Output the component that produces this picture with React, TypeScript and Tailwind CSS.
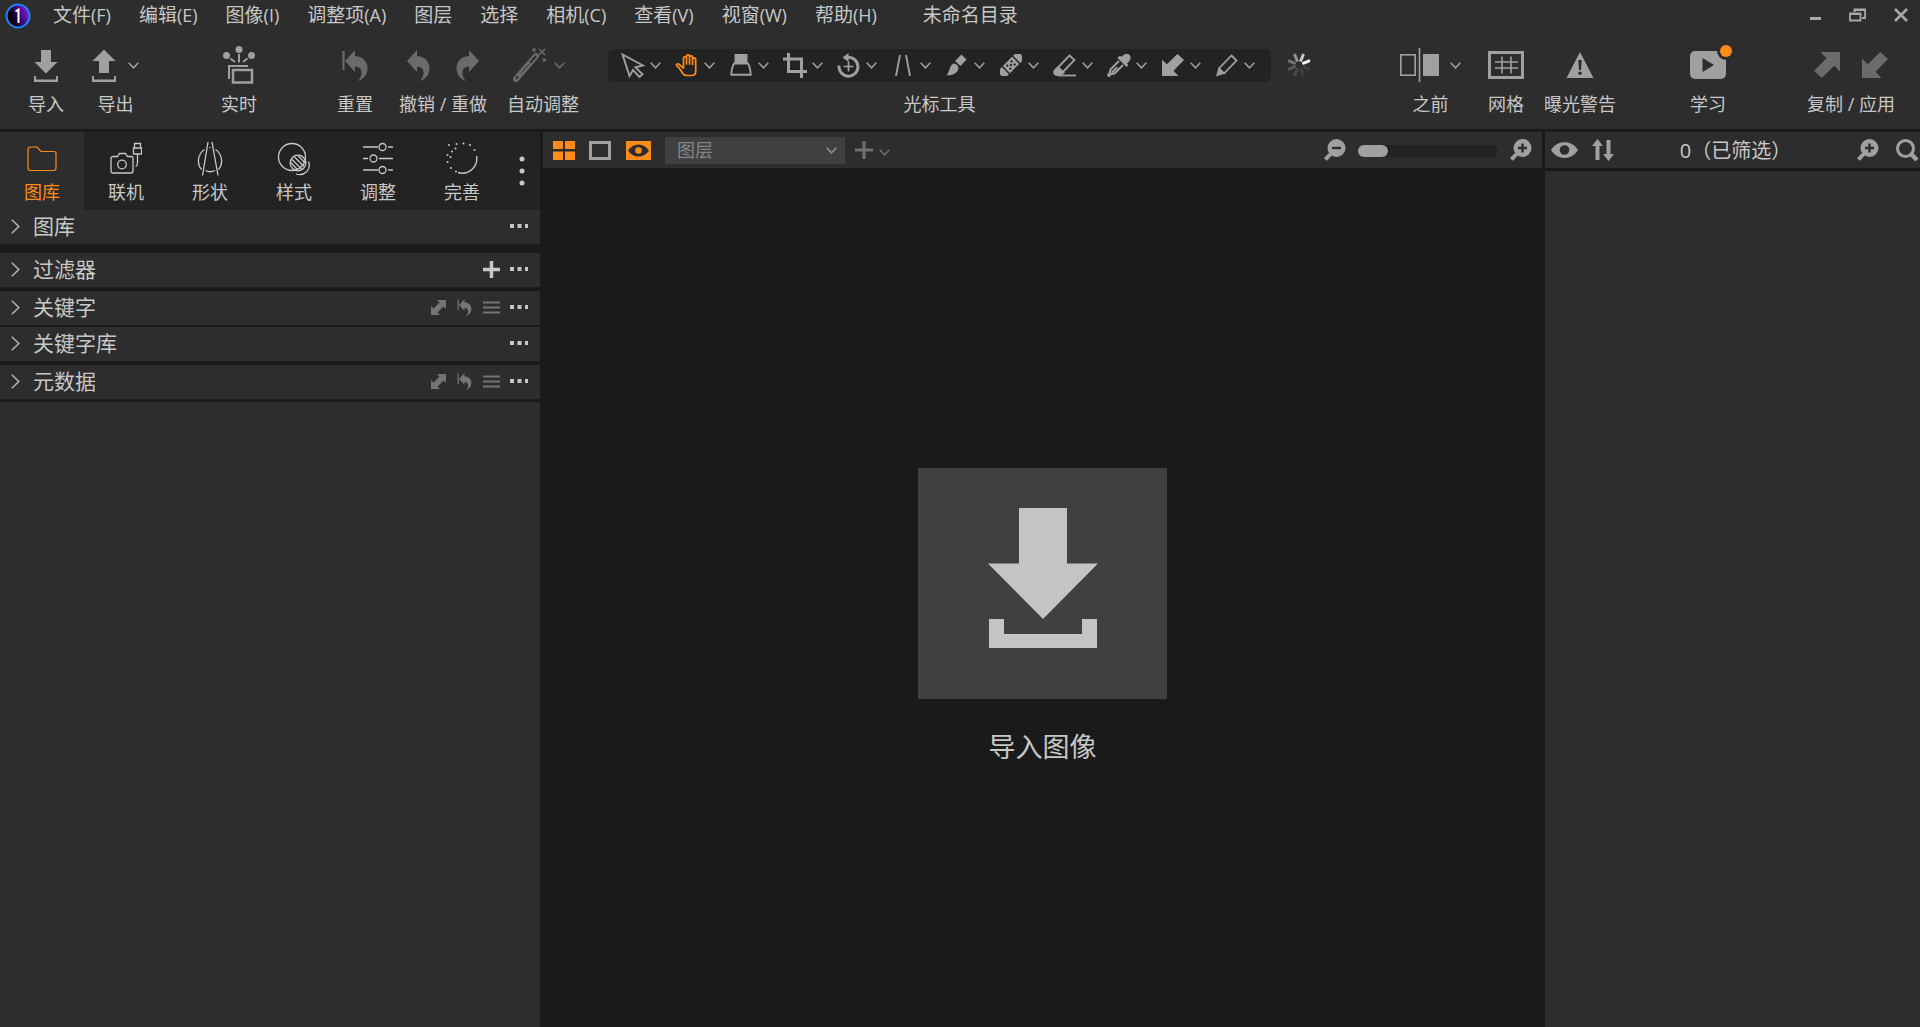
import React, { useState } from "react";

type SvgProps = { w: number; h: number; className?: string; children: React.ReactNode };

function Svg({ w, h, className = "", children }: SvgProps) {
  return (
    <svg width={w} height={h} viewBox={`0 0 ${w} ${h}`} fill="none" aria-hidden="true" className={`shrink-0 ${className}`}>
      {children}
    </svg>
  );
}

const Chevron = ({ className = "" }: { className?: string }) => (
  <Svg w={11} h={7} className={className}>
    <path d="M.7 .8 5.5 5.8 10.3 .8" stroke="currentColor" strokeWidth="1.5" />
  </Svg>
);

const ImportIcon = () => (
  <Svg w={24} h={33}>
    <path d="M7 1h10v12h6.500L12 24.500.5 13H7z" fill="currentColor" />
    <path d="M0 27h2v3.500h20V27h2v6H0z" fill="currentColor" />
  </Svg>
);
const ExportIcon = () => (
  <Svg w={24} h={33}>
    <path d="M7 24h10V12h6.500L12 .5.5 12H7z" fill="currentColor" />
    <path d="M0 27h2v3.500h20V27h2v6H0z" fill="currentColor" />
  </Svg>
);
const LiveIcon = () => (
  <Svg w={32} h={38}>
    <g fill="currentColor">
      <circle cx="16" cy="3.500" r="3.500" />
      <circle cx="3.500" cy="9.500" r="3.500" />
      <circle cx="28.500" cy="9.500" r="3.500" />
    </g>
    <g stroke="currentColor" strokeWidth="2">
      <path d="M16 8v8.500M7.500 12.500l4.500 3.500M24.500 12.500 20 16" />
      <path d="M6 33V20h19" />
      <rect x="10" y="24" width="19" height="12.500" strokeWidth="2.500" />
    </g>
  </Svg>
);
const ResetIcon = ({ w = 26, h = 31 }: { w?: number; h?: number }) => (
  <svg width={w} height={h} viewBox="0 0 26 31" fill="none" aria-hidden="true" className="shrink-0">
    <path d="M1.500 1v19" stroke="currentColor" strokeWidth="2.200" />
    <path d="M13 0v6c8 .5 13 6 12.500 13-.4 6-4 10-9.500 12 4.500-4.500 6-14-3-14.500V22L3 11z" fill="currentColor" />
  </svg>
);
const UndoIcon = ({ flip = false }: { flip?: boolean }) => (
  <Svg w={23} h={31} className={flip ? "-scale-x-100" : ""}>
    <path d="M10 0v6c8 .5 13 6 12.500 13-.4 6-4 10-9.500 12 4.500-4.500 6-14-3-14.500V22L0 11z" fill="currentColor" />
  </Svg>
);
const WandIcon = () => (
  <Svg w={33} h={34}>
    <path d="M3 31 23 8" stroke="currentColor" strokeWidth="6" strokeLinecap="round" />
    <path d="m17 15 6-7" stroke="#2d2d2d" strokeWidth="2" />
    <path d="m8 25.500 8-9.500" stroke="#2d2d2d" strokeWidth="1" />
    <circle cx="4" cy="29.500" r="1.300" fill="#2d2d2d" />
    <path d="m26 1 6 6m0-6-6 6M19.500.5l3 3m0-3-3 3M30 10.500l3 3m0-3-3 3" stroke="currentColor" strokeWidth="1.500" />
  </Svg>
);

const PointerIcon = () => (
  <Svg w={24} h={25}>
    <path d="m1.500 1.500 20.500 11-7.500 1.800 7 7-3 2.700-6.500-7-3.500 6z" stroke="currentColor" strokeWidth="1.900" />
  </Svg>
);
const HandIcon = () => (
  <Svg w={23} h={23}>
    <path
      d="M8.500 13V4.200a1.500 1.500 0 0 1 3 0V10 2.300a1.500 1.500 0 0 1 3 0V10 3.300a1.500 1.500 0 0 1 3 0V10.500 5.500a1.500 1.500 0 0 1 3.200 0V17.500c0 2.500-1.700 4-4.200 4h-4.500c-2.500 0-3.800-1-5-3.200L3.800 13.500 1.700 11.800c-.8-1.200.8-2.400 2.300-1.500L8.500 14z"
      stroke="currentColor"
      strokeWidth="1.700"
      strokeLinejoin="round"
    />
  </Svg>
);
const GradientLensIcon = () => (
  <Svg w={22} h={22}>
    <path d="M4.500 0h13v9.500h-13z" fill="currentColor" />
    <path d="M4 9.500h14c1.500 2.500 2.500 6.500 2.700 11.200H1.300C1.500 16 2.500 12 4 9.500z" stroke="currentColor" strokeWidth="1.900" />
  </Svg>
);
const CropIcon = () => (
  <Svg w={24} h={25}>
    <path d="M5.500 0v18.500H24M0 6h18.500v19" stroke="currentColor" strokeWidth="3" />
  </Svg>
);
const RotateIcon = () => (
  <Svg w={24} h={25}>
    <path d="M10.500 4.200A9.500 9.500 0 1 1 2 12.500" stroke="currentColor" strokeWidth="3" />
    <path d="M11.500 0v9L5.500 4.500z" fill="currentColor" />
    <path d="M11.500 8.500v10M6.500 13.500h10" stroke="currentColor" strokeWidth="1.700" />
  </Svg>
);
const KeystoneIcon = () => (
  <Svg w={16} h={21}>
    <path d="M5 0 1 21M11 0l4 21" stroke="currentColor" strokeWidth="1.900" />
  </Svg>
);
const BrushIcon = () => (
  <Svg w={21} h={22}>
    <path d="M15.500.5 20.500 5.500 14.500 12 9 7z" fill="currentColor" />
    <path d="M8 9.500c2.500.3 4.500 2.200 4.500 5-1 5-6 7.300-12 6.700C4 18 3 11 8 9.500z" fill="currentColor" />
  </Svg>
);
const HealIcon = () => (
  <Svg w={22} h={22}>
    <g transform="rotate(-45 11 11)">
      <path d="M3 6H1.500a5 5 0 0 0 0 10H3zM19 6h1.500a5 5 0 0 1 0 10H19z" fill="currentColor" />
      <rect x="4.500" y="6" width="13" height="10" fill="currentColor" />
      <g fill="#232323">
        <rect x="7" y="7.800" width="2" height="2" />
        <rect x="13" y="7.800" width="2" height="2" />
        <rect x="7" y="12.200" width="2" height="2" />
        <rect x="13" y="12.200" width="2" height="2" />
        <rect x="10" y="10" width="2" height="2" />
      </g>
    </g>
  </Svg>
);
const EraserIcon = () => (
  <Svg w={23} h={23}>
    <path d="M16.500 1.500 21.500 6 7.500 20.500 2.500 16z" stroke="currentColor" strokeWidth="1.800" />
    <path d="m5 12 7 6.500-3.500 3-4 .5C1 22-1 18.500 1 16z" fill="currentColor" />
    <path d="M5 21.500h18" stroke="currentColor" strokeWidth="1.800" />
  </Svg>
);
const DropperIcon = () => (
  <Svg w={24} h={24}>
    <path d="m15 3.500c3-4.500 9-3.500 8.500 2-.5 3-3 4-3.500 5l1.500 1.500-2 2L10.500 5l2-2z" fill="currentColor" />
    <path d="M12 8 3.500 16.500 2.500 21.500l5-1L16 12" stroke="currentColor" strokeWidth="2" />
    <path d="m9 14-5 5 1.500 1.500 6-6z" fill="currentColor" />
    <circle cx="2" cy="22" r="1.900" fill="currentColor" />
  </Svg>
);
const ArrowSW = ({ size = 22 }: { size?: number }) => (
  <svg width={size} height={size} viewBox="0 0 22 22" aria-hidden="true" className="shrink-0">
    <path d="M0 5.500 4.800 10.300 15.500 0 22 6 11.500 16.800 16.500 22H0z" fill="currentColor" />
  </svg>
);
const PenIcon = () => (
  <Svg w={22} h={23}>
    <path d="M15.500 1.500 20.500 6.500 8 19.500 3 14.500z" stroke="currentColor" strokeWidth="1.800" />
    <path d="M2.500 13.500 9 19.500 0 22.500z" fill="currentColor" />
  </Svg>
);

const SPOKES = ["#c5c5c5", "#f8f8f8", "#3d3d3d", "#404040", "#484848", "#5a5a5a", "#747474", "#8f8f8f"];
const Spinner = () => (
  <svg width="24" height="24" viewBox="-12 -12 24 24" role="img" aria-label="处理中" className="shrink-0">
    {SPOKES.map((c, i) => (
      <rect key={i} x="-1.500" y="-12" width="3" height="8.500" rx="1" fill={c} transform={`rotate(${22.5 + i * 45})`} />
    ))}
  </svg>
);

const BeforeIcon = () => (
  <Svg w={39} h={34}>
    <rect x=".8" y="6.800" width="14.400" height="20.400" stroke="currentColor" strokeWidth="1.600" />
    <path d="M19.500 0v34" stroke="currentColor" strokeWidth="1.600" />
    <rect x="23" y="6" width="16" height="22" fill="currentColor" />
  </Svg>
);
const GridIcon = () => (
  <Svg w={36} h={28}>
    <rect x="1.500" y="1.500" width="33" height="25" stroke="currentColor" strokeWidth="3" />
    <path d="M7 11h23M7 17h23M14 5.500v17M23 5.500v17" stroke="currentColor" strokeWidth="1.600" />
  </Svg>
);
const WarnIcon = () => (
  <Svg w={28} h={26}>
    <path d="M14 0 27.500 26H.5z" fill="currentColor" />
    <path d="M12.300 8h3.400l-.7 10h-2z" fill="#2d2d2d" />
    <circle cx="14" cy="21.300" r="1.800" fill="#2d2d2d" />
  </Svg>
);
const LearnIcon = () => (
  <Svg w={36} h={28}>
    <rect width="36" height="28" rx="5" fill="currentColor" />
    <path d="M12.500 7v14L24 14z" fill="#2d2d2d" />
    <circle cx="36" cy="0" r="9" fill="#2d2d2d" />
  </Svg>
);

const FolderIcon = () => (
  <Svg w={30} h={34}>
    <path d="M4 5h6l4 4.500h13c1 0 2 1 2 2V26c0 1.500-1 2.500-2.500 2.500H3.500C2 28.500 1 27.500 1 26V7.500C1 6 2 5 4 5z" stroke="currentColor" strokeWidth="1.200" />
  </Svg>
);
const TetherIcon = () => (
  <Svg w={32} h={34}>
    <g stroke="currentColor" strokeWidth="1.300">
      <path d="M3 14.500h4.500l2-3h6l2 3H21c1.300 0 2 .8 2 2V29c0 1.300-.8 2-2 2H3c-1.300 0-2-.8-2-2V16.500c0-1.200.8-2 2-2z" />
      <circle cx="12" cy="22.500" r="4.300" />
      <path d="M24.500 1.500h6V6h-6zM23.500 6h8v6h-8zM27.500 12v9c0 2-.5 3-2 3.500" />
    </g>
  </Svg>
);
const ShapeIcon = () => (
  <Svg w={26} h={34}>
    <path d="M11 0 5.500 33.500M15 0l6 33.500M7.500 7.500c-7.500 5-7.500 15-3 20M18.500 7.500c7.500 5 7.500 15 3 20M8.500 28.500c2.800 1.500 6.500 1.500 9.500 0M13 5v1" stroke="currentColor" strokeWidth="1.300" />
  </Svg>
);
const StyleIcon = () => (
  <Svg w={34} h={34}>
    <g stroke="currentColor" strokeWidth="1.300">
      <circle cx="15" cy="15" r="13.500" />
      <circle cx="21" cy="21" r="7.800" />
      <path d="M31.500 19.500c3 8-4 15-12.500 12.500M15 17.500l9.500 9.500M13.800 20.500l7 7.500M17.500 15 27 24.500M21 13.500l7.500 8" />
    </g>
  </Svg>
);
const SlidersIcon = () => (
  <Svg w={30} h={34}>
    <g stroke="currentColor" strokeWidth="1.300">
      <path d="M0 5h15M25 5h5M0 16.500h5M16 16.500h14M0 28h15M25 28h5" />
      <circle cx="19.500" cy="5" r="3.500" />
      <circle cx="10.500" cy="16.500" r="3.500" />
      <circle cx="19.500" cy="28" r="3.500" />
    </g>
  </Svg>
);
const RefineIcon = () => (
  <Svg w={32} h={34}>
    <path d="M30.500 14A14.500 14.500 0 0 1 12 30.500" stroke="currentColor" strokeWidth="1.400" />
    <g fill="currentColor">
      <circle cx="3" cy="3" r="1" /><circle cx="10.500" cy="2" r="1" /><circle cx="17.500" cy="1.500" r="1" /><circle cx="24" cy="3" r="1" />
      <circle cx="28.500" cy="8" r="1" /><circle cx="1.500" cy="13" r="1" /><circle cx="1.500" cy="20" r="1" /><circle cx="5" cy="26" r="1" />
      <circle cx="10" cy="29.500" r="1" /><circle cx="4.500" cy="15" r="1" /><circle cx="6" cy="9.500" r="1" /><circle cx="9.500" cy="6.500" r="1" />
    </g>
  </Svg>
);

const ZoomGlass = ({ plus = false }: { plus?: boolean }) => (
  <Svg w={22} h={22}>
    <circle cx="12.500" cy="9" r="9" fill="currentColor" />
    <path d="M6.500 15 1.500 20.500" stroke="currentColor" strokeWidth="4" />
    <path d={plus ? "M8 9h9M12.500 4.500v9" : "M8 9h9"} stroke="#2d2d2d" strokeWidth="2.400" />
  </Svg>
);

const menus: [string, string][] = [
  ["文件", "(F)"], ["编辑", "(E)"], ["图像", "(I)"], ["调整项", "(A)"], ["图层", ""],
  ["选择", ""], ["相机", "(C)"], ["查看", "(V)"], ["视窗", "(W)"], ["帮助", "(H)"],
];

const cursorTools: [string, React.ReactNode][] = [
  ["选择", <PointerIcon />], ["平移", <HandIcon />], ["渐变", <GradientLensIcon />], ["裁剪", <CropIcon />],
  ["旋转", <RotateIcon />], ["梯形校正", <KeystoneIcon />], ["画笔", <BrushIcon />], ["修复", <HealIcon />],
  ["擦除", <EraserIcon />], ["取色", <DropperIcon />], ["应用调整", <ArrowSW />], ["注释", <PenIcon />],
];

const tabs: [string, React.ReactNode][] = [
  ["图库", <FolderIcon />], ["联机", <TetherIcon />], ["形状", <ShapeIcon />],
  ["样式", <StyleIcon />], ["调整", <SlidersIcon />], ["完善", <RefineIcon />],
];

function Tool({ label, icons, className = "" }: { label: string; icons: React.ReactNode; className?: string }) {
  return (
    <button type="button" className={`flex shrink-0 flex-col items-center ${className}`}>
      <span className="flex h-10 items-center">{icons}</span>
      <span className="mt-[7px] whitespace-nowrap text-[18px] leading-6 text-[#c8c8c8]">{label}</span>
    </button>
  );
}

function TitleBar() {
  return (
    <header className="flex h-[30px] items-center bg-[#2d2d2d] pl-[5px] pr-3">
      <svg width="26" height="26" viewBox="0 0 26 26" aria-hidden="true" className="mr-[22px] mt-0.5 shrink-0">
        <defs>
          <linearGradient id="orb" x1="0" y1=".6" x2="1" y2=".2">
            <stop offset=".2" stopColor="#05000c" />
            <stop offset=".6" stopColor="#4a0a8c" />
            <stop offset="1" stopColor="#9a1be8" />
          </linearGradient>
        </defs>
        <circle cx="13" cy="13" r="11.500" fill="url(#orb)" stroke="#1c83f5" strokeWidth="2" />
        <path d="m10.500 8.500 3-2V20" fill="none" stroke="#fff" strokeWidth="2" />
      </svg>
      <nav className="flex items-center gap-7">
        {menus.map(([name, key]) => (
          <button key={name} type="button" className="flex items-baseline whitespace-nowrap text-[19px] leading-6">
            {name}
            {key && <span className="text-[18px]">{key}</span>}
          </button>
        ))}
      </nav>
      <h1 className="ml-[46px] whitespace-nowrap text-[19px] leading-6">未命名目录</h1>
      <div className="ml-auto flex items-center gap-7 text-[#a8a8a8]">
        <button type="button" aria-label="最小化">
          <Svg w={11} h={14}><path d="M0 10.500h11" stroke="currentColor" strokeWidth="3" /></Svg>
        </button>
        <button type="button" aria-label="还原">
          <Svg w={17} h={14}>
            <path d="M5.500 4V1.500h10.700v8.500H13M5 2h11.500" stroke="currentColor" strokeWidth="2" />
            <path d="M1 5.500h10.500v7H1zM1 6h11" stroke="currentColor" strokeWidth="1.800" />
          </Svg>
        </button>
        <button type="button" aria-label="关闭">
          <Svg w={14} h={14}><path d="m1 1 12 12M13 1 1 13" stroke="currentColor" strokeWidth="2.600" /></Svg>
        </button>
      </div>
    </header>
  );
}

function Toolbar() {
  const [tool, setTool] = useState("平移");
  return (
    <div className="flex h-[99px] items-start bg-[#2d2d2d] pl-7 pr-[25px] pt-[15px] text-[#a0a0a0]">
      <Tool label="导入" icons={<ImportIcon />} />
      <Tool label="导出" className="ml-7" icons={<><ExportIcon /><Chevron className="ml-3" /></>} />
      <Tool label="实时" className="ml-[82px]" icons={<LiveIcon />} />
      <Tool label="重置" className="ml-20 text-[#6b6b6b]" icons={<ResetIcon />} />
      <div role="group" aria-label="撤销 / 重做" className="ml-[26px] flex shrink-0 flex-col items-center">
        <div className="flex h-10 items-center gap-[26px] text-[#6b6b6b]">
          <button type="button" aria-label="撤销"><UndoIcon /></button>
          <button type="button" aria-label="重做"><UndoIcon flip /></button>
        </div>
        <span className="mt-[7px] whitespace-nowrap text-[18px] leading-6 text-[#c8c8c8]">撤销 / 重做</span>
      </div>
      <Tool label="自动调整" className="ml-5 text-[#6b6b6b]" icons={<><WandIcon /><Chevron className="ml-2 mr-2" /></>} />
      <div className="ml-[29px] flex shrink-0 flex-col items-center">
        <div className="flex h-10 items-center">
          <div className="flex h-[33px] items-center rounded-md bg-[#232323] pl-2 pr-[7px]">
            {cursorTools.map(([name, icon]) => (
              <button
                key={name}
                type="button"
                aria-label={name}
                aria-pressed={tool === name}
                onClick={() => setTool(name)}
                className="flex w-[54px] items-center"
              >
                <span className={`flex w-[34px] justify-center ${tool === name ? "text-[#ff8c1a]" : ""}`}>{icon}</span>
                <Chevron />
              </button>
            ))}
          </div>
        </div>
        <span className="mt-[7px] text-[18px] leading-6 text-[#c8c8c8]">光标工具</span>
      </div>
      <div className="ml-4 flex h-10 items-center"><Spinner /></div>
      <Tool label="之前" className="ml-auto" icons={<><BeforeIcon /><Chevron className="ml-[11px]" /></>} />
      <Tool label="网格" className="ml-[27px]" icons={<GridIcon />} />
      <Tool label="曝光警告" className="ml-5" icons={<WarnIcon />} />
      <Tool
        label="学习"
        className="ml-[74px]"
        icons={
          <span className="relative">
            <LearnIcon />
            <span className="absolute -right-1.5 -top-1.5 size-3 rounded-full bg-[#ff8c1a]" />
          </span>
        }
      />
      <div role="group" aria-label="复制 / 应用" className="ml-[81px] flex shrink-0 flex-col items-center">
        <div className="flex h-10 items-center gap-[22px] text-[#6b6b6b]">
          <button type="button" aria-label="复制" className="rotate-180"><ArrowSW size={26} /></button>
          <button type="button" aria-label="应用"><ArrowSW size={26} /></button>
        </div>
        <span className="mt-[7px] whitespace-nowrap text-[18px] leading-6 text-[#c8c8c8]">复制 / 应用</span>
      </div>
    </div>
  );
}

const SwapIcon = () => (
  <Svg w={15} h={15}>
    <path d="M6 0h9v9l-2.500-2.500-6 6L9 15H0V6l2.500 2.500 6-6z" fill="currentColor" />
  </Svg>
);

function Panel({ title, className = "", add = false, edit = false }: { title: string; className?: string; add?: boolean; edit?: boolean }) {
  return (
    <section className={`flex h-[34px] items-center bg-[#2d2d2d] pb-0.5 pl-[11px] pr-3 ${className}`}>
      <button type="button" aria-expanded="false" className="flex flex-1 items-center gap-[13px]">
        <Svg w={9} h={15}><path d="m.8.8 7 6.700-7 6.700" stroke="#b4b4b4" strokeWidth="1.500" /></Svg>
        <span className="text-[21px] leading-7">{title}</span>
      </button>
      {add && (
        <button type="button" aria-label="添加" className="mr-2.5 text-[#c8c8c8]">
          <Svg w={17} h={17}><path d="M8.500 0v17M0 8.500h17" stroke="currentColor" strokeWidth="3.500" /></Svg>
        </button>
      )}
      {edit && (
        <div className="mr-2.5 flex items-center gap-[11px] text-[#747474]">
          <button type="button" aria-label="复制"><SwapIcon /></button>
          <button type="button" aria-label="重置"><ResetIcon w={15} h={17} /></button>
          <button type="button" aria-label="预设">
            <Svg w={17} h={13}><path d="M0 1.500h17M0 6.500h17M0 11.500h17" stroke="currentColor" strokeWidth="2" /></Svg>
          </button>
        </div>
      )}
      <button type="button" aria-label="更多">
        <Svg w={18} h={4}><path d="M0 0h4v4H0zM7.500 0h4v4h-4zM15 0h3.500v4H15z" fill="#c8c8c8" /></Svg>
      </button>
    </section>
  );
}

function Sidebar() {
  const [active, setActive] = useState("图库");
  return (
    <aside className="flex w-[540px] shrink-0 flex-col">
      <div className="flex h-[78px] bg-[#232323]">
        {tabs.map(([name, icon]) => (
          <button
            key={name}
            type="button"
            onClick={() => setActive(name)}
            className={`flex w-[84px] flex-col items-center pt-2.5 ${active === name ? "bg-[#2d2d2d] text-[#ff8c1a]" : "text-[#c8c8c8]"}`}
          >
            {icon}
            <span className="mt-1 text-[18px] leading-6">{name}</span>
          </button>
        ))}
        <button type="button" aria-label="更多工具" className="flex flex-1 items-center justify-center">
          <Svg w={6} h={30}>
            <g fill="#c8c8c8"><circle cx="3" cy="3" r="2.500" /><circle cx="3" cy="15" r="2.500" /><circle cx="3" cy="27" r="2.500" /></g>
          </Svg>
        </button>
      </div>
      <Panel title="图库" />
      <Panel title="过滤器" className="mt-[9px]" add />
      <Panel title="关键字" className="mt-1" edit />
      <Panel title="关键字库" className="mt-0.5" />
      <Panel title="元数据" className="mt-1" edit />
      <div className="mt-[3px] flex-1 bg-[#2d2d2d]" />
    </aside>
  );
}

function Viewer() {
  const [zoom, setZoom] = useState(0);
  return (
    <main className="flex min-w-0 flex-1 flex-col">
      <div className="flex h-9 items-center bg-[#2d2d2d] pl-2.5 pr-2.5 text-[#a0a0a0]">
        <button type="button" aria-label="网格视图" className="text-[#ff8c1a]">
          <Svg w={22} h={19}><path d="M0 0h10v8H0zM12 0h10v8H12zM0 10.500h10v8.500H0zM12 10.500h10v8.500H12z" fill="currentColor" /></Svg>
        </button>
        <button type="button" aria-label="单图视图" className="ml-3.5">
          <Svg w={22} h={19}><rect x="1.500" y="1.500" width="19" height="16" stroke="currentColor" strokeWidth="3" /></Svg>
        </button>
        <button type="button" aria-label="显示查看器" className="ml-[15px] text-[#ff8c1a]">
          <Svg w={25} h={19}>
            <rect width="25" height="19" fill="currentColor" />
            <path d="M2 9.500C7 1.500 18 1.500 23 9.500 18 17.500 7 17.500 2 9.500z" fill="#2d2d2d" />
            <circle cx="12.500" cy="9.500" r="3.300" fill="currentColor" />
          </Svg>
        </button>
        <div className="relative ml-3.5">
          <select aria-label="图层" className="h-[27px] w-[180px] appearance-none bg-[#404040] pl-3 text-[18px] leading-6 text-[#858585]">
            <option>图层</option>
          </select>
          <Chevron className="pointer-events-none absolute right-2 top-2.5 text-[#909090]" />
        </div>
        <button type="button" aria-label="新建图层" className="ml-2.5 flex items-center text-[#707070]">
          <Svg w={18} h={18}><path d="M9 0v18M0 9h18" stroke="currentColor" strokeWidth="3" /></Svg>
          <Chevron className="ml-1.5 mt-1" />
        </button>
        <button type="button" aria-label="缩小" className="ml-auto"><ZoomGlass /></button>
        <input
          type="range"
          aria-label="缩放"
          min={0}
          max={100}
          value={zoom}
          onChange={(e) => setZoom(Number(e.target.value))}
          className="ml-3 mt-0.5 h-3 w-[140px] appearance-none rounded-full bg-[#232323] [&::-webkit-slider-thumb]:h-3 [&::-webkit-slider-thumb]:w-[30px] [&::-webkit-slider-thumb]:appearance-none [&::-webkit-slider-thumb]:rounded-full [&::-webkit-slider-thumb]:bg-[#a0a0a0]"
        />
        <button type="button" aria-label="放大" className="ml-3"><ZoomGlass plus /></button>
      </div>
      <div className="flex flex-1 flex-col items-center justify-center pt-10">
        <button type="button" className="flex flex-col items-center">
          <span className="flex h-[231px] w-[249px] items-start justify-center bg-[#404040] pt-10 text-[#c4c4c4]">
            <Svg w={110} h={140}>
              <path d="M31 0h48v55.500h31L55 111 0 55.500h31z" fill="currentColor" />
              <path d="M1 111h15v15h78v-15h15v29H1z" fill="currentColor" />
            </Svg>
          </span>
          <span className="mt-7 text-[27px] leading-10">导入图像</span>
        </button>
      </div>
    </main>
  );
}

function Browser() {
  return (
    <aside className="flex w-[375px] shrink-0 flex-col">
      <div className="flex h-9 items-center bg-[#2d2d2d] pl-1.5 text-[#a0a0a0]">
        <button type="button" aria-label="显示浏览器">
          <Svg w={27} h={16}>
            <path d="M0 8C6-2.500 21-2.500 27 8 21 18.500 6 18.500 0 8z" fill="currentColor" />
            <circle cx="13.500" cy="8" r="4.800" fill="#2d2d2d" />
          </Svg>
        </button>
        <button type="button" aria-label="排序" className="ml-3.5">
          <Svg w={22} h={22}><path d="M3.500 21V7H0l5.500-7L11 7H7.500v14zM14.500 1v14H11l5.500 7 5.500-7h-3.500V1z" fill="currentColor" /></Svg>
        </button>
        <span className="flex-1 pt-0.5 text-center text-[20px] leading-7 text-[#c8c8c8]">0（已筛选）</span>
        <button type="button" aria-label="缩略图大小"><ZoomGlass plus /></button>
        <button type="button" aria-label="搜索" className="ml-[17px]">
          <Svg w={24} h={22}>
            <circle cx="9.500" cy="9.500" r="8" stroke="currentColor" strokeWidth="3" />
            <path d="m15 15 6 6" stroke="currentColor" strokeWidth="4.500" />
          </Svg>
        </button>
      </div>
      <div className="mt-[3px] flex-1 bg-[#2d2d2d]" />
    </aside>
  );
}

export default function App() {
  return (
    <div className="flex min-h-screen flex-col overflow-x-hidden bg-[#1a1a1a] font-['Open_Sans','Noto_Sans_CJK_SC',sans-serif] text-[#c8c8c8]">
      <TitleBar />
      <Toolbar />
      <div className="mt-[3px] flex flex-1 gap-[3px]">
        <Sidebar />
        <Viewer />
        <Browser />
      </div>
    </div>
  );
}
